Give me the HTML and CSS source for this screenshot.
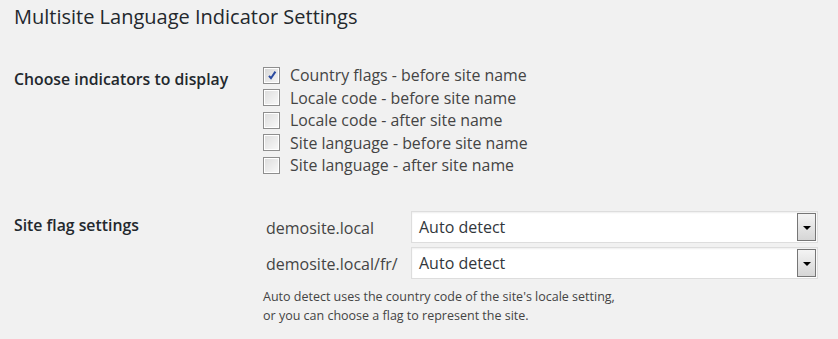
FILE: index.html
```html
<!DOCTYPE html>
<html>
<head>
    <meta charset="UTF-8">
    <title>Multisite Language Indicator Settings</title>
    <link rel="stylesheet" href="styles.css">
</head>
<body>
    <div id="wrap">
        <h2 class="page-title">Multisite Language Indicator Settings</h2>

        <div class="setting-row">
            <div class="setting-label">Choose indicators to display</div>
            <div class="setting-field">
                <label class="check"><span class="box checked"><svg viewBox="0 0 12 12" width="12" height="12"><path d="M3 6.8 L5 9.2 L9.4 2.6" fill="none" stroke="#2a4aa0" stroke-width="2"/></svg></span>Country flags - before site name</label>
                <label class="check"><span class="box"></span>Locale code - before site name</label>
                <label class="check"><span class="box"></span>Locale code - after site name</label>
                <label class="check"><span class="box"></span>Site language - before site name</label>
                <label class="check"><span class="box"></span>Site language - after site name</label>
            </div>
        </div>

        <div class="setting-row flags">
            <div class="setting-label">Site flag settings</div>
            <div class="setting-field">
                <div class="site-row">
                    <span class="site-name">demosite.local</span>
                    <div class="fake-select"><span class="value">Auto detect</span><span class="arrow"></span></div>
                </div>
                <div class="site-row">
                    <span class="site-name">demosite.local/fr/</span>
                    <div class="fake-select"><span class="value">Auto detect</span><span class="arrow"></span></div>
                </div>
                <p class="description">Auto detect uses the country code of the site's locale setting,<br>or you can choose a flag to represent the site.</p>
            </div>
        </div>
    </div>
</body>
</html>
```

FILE: styles.css
```css
body {
    margin: 0;
    background: #f1f1f1;
    color: #444;
    font-family: "Open Sans", sans-serif;
    font-size: 16px;
}

#wrap {
    padding: 0 20px 0 14px;
}

.page-title {
    margin: 0;
    padding: 4px 0 0;
    font-size: 20px;
    font-weight: 400;
    line-height: 26px;
    color: #23282d;
}

.setting-row {
    display: grid;
    grid-template-columns: 249px 1fr;
    margin-top: 34px;
}

.setting-label {
    font-weight: 600;
    font-size: 15.8px;
    color: #23282d;
    padding-top: 4px;
    line-height: 22px;
}

.setting-field {
    display: flex;
    flex-direction: column;
}

.check {
    display: flex;
    align-items: center;
    height: 22.5px;
    font-size: 15.9px;
    color: #444;
}

.box {
    box-sizing: border-box;
    width: 17px;
    height: 17px;
    margin-right: 10px;
    border: 1px solid #8e8e8e;
    background: linear-gradient(135deg, #dcdcdc, #fafafa);
    box-shadow: inset 0 0 0 1px #fff;
    display: flex;
    align-items: center;
    justify-content: center;
}

.box.checked {
    background: linear-gradient(135deg, #d6d6d6, #f6f6f6);
}

.flags {
    margin-top: 34px;
}

.flags .setting-label {
    padding-top: 3px;
}

.site-row {
    display: flex;
    align-items: center;
    margin-bottom: 4px;
}

.site-name {
    width: 145px;
    padding: 3px 0 0 3px;
    color: #444;
}

.fake-select {
    box-sizing: border-box;
    flex: 0 0 407px;
    height: 32px;
    display: flex;
    align-items: center;
    justify-content: space-between;
    background: #fff;
    border: 1px solid #ddd;
    box-shadow: inset 0 1px 2px rgba(0, 0, 0, 0.07);
    padding: 0 1px 0 7px;
    color: #32373c;
}

.value {
    padding-top: 1px;
}

.arrow {
    box-sizing: border-box;
    width: 19px;
    height: 28px;
    border: 1px solid #767676;
    background: linear-gradient(#f4f4f4, #e6e6e6 45%, #d6d6d6);
    position: relative;
}

.arrow::after {
    content: "";
    position: absolute;
    left: 5px;
    top: 12px;
    border-left: 4px solid transparent;
    border-right: 4px solid transparent;
    border-top: 4px solid #000;
}

.description {
    margin: 4px 0 0;
    font-size: 12.5px;
    line-height: 19px;
    color: #444;
}
```
